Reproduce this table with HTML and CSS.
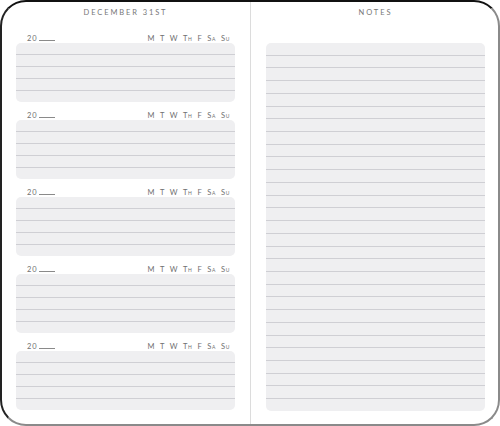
FILE: index.html
```html
<!DOCTYPE html>
<html lang="en">

<head>
    <meta charset="UTF-8">
    <meta name="viewport" content="width=device-width, initial-scale=1.0">
    <title>Planner - December 31st</title>
    <link rel="stylesheet" href="styles.css">
</head>

<body>
    <div class="notebook">
        <div class="page page-left">
            <div class="page-title">December 31st</div>
            <div class="entry">
                <div class="entry-head">
                    <span class="year">20<span class="blank"></span></span>
                    <span class="days">M T W Th F Sa Su</span>
                </div>
                <div class="box">
                    <div class="row"></div><div class="row"></div><div class="row"></div><div class="row"></div><div class="row"></div>
                </div>
            </div>
            <div class="entry">
                <div class="entry-head">
                    <span class="year">20<span class="blank"></span></span>
                    <span class="days">M T W Th F Sa Su</span>
                </div>
                <div class="box">
                    <div class="row"></div><div class="row"></div><div class="row"></div><div class="row"></div><div class="row"></div>
                </div>
            </div>
            <div class="entry">
                <div class="entry-head">
                    <span class="year">20<span class="blank"></span></span>
                    <span class="days">M T W Th F Sa Su</span>
                </div>
                <div class="box">
                    <div class="row"></div><div class="row"></div><div class="row"></div><div class="row"></div><div class="row"></div>
                </div>
            </div>
            <div class="entry">
                <div class="entry-head">
                    <span class="year">20<span class="blank"></span></span>
                    <span class="days">M T W Th F Sa Su</span>
                </div>
                <div class="box">
                    <div class="row"></div><div class="row"></div><div class="row"></div><div class="row"></div><div class="row"></div>
                </div>
            </div>
            <div class="entry">
                <div class="entry-head">
                    <span class="year">20<span class="blank"></span></span>
                    <span class="days">M T W Th F Sa Su</span>
                </div>
                <div class="box">
                    <div class="row"></div><div class="row"></div><div class="row"></div><div class="row"></div><div class="row"></div>
                </div>
            </div>
        </div>

        <div class="page page-right">
            <div class="page-title">Notes</div>
            <div class="box notes-box" id="notes"></div>
        </div>
    </div>
    <script>
        const notes = document.getElementById("notes");
        for (let i = 0; i < 29; i++) {
            const row = document.createElement("div");
            row.className = "row";
            notes.appendChild(row);
        }
    </script>
</body>

</html>
```

FILE: styles.css
```css
body {
    margin: 0;
    background-color: #ffffff;
    font-family: "Lato", "Liberation Sans", sans-serif;
    font-variant-ligatures: none;
}

.notebook {
    width: 500px;
    height: 426px;
    box-sizing: border-box;
    display: flex;
    background-color: #ffffff;
    border-top: 2px solid #111111;
    border-left: 2px solid #222222;
    border-right: 2px solid #8a8a8a;
    border-bottom: 2px solid #8a8a8a;
    border-radius: 26px;
    overflow: hidden;
}

.page {
    display: flex;
    flex-direction: column;
}

.page-left {
    width: 248px;
    padding: 6px 15px 0 14px;
    box-sizing: border-box;
}

.page-right {
    flex: 1;
    border-left: 1px solid #dcdcdc;
    padding: 6px 13px 0 15px;
}

.page-title {
    height: 10px;
    line-height: 10px;
    font-size: 7.5px;
    letter-spacing: 1.9px;
    text-transform: uppercase;
    text-align: center;
    color: #777777;
    margin-bottom: 15px;
}

.entry {
    margin-bottom: 8px;
}

.entry-head {
    height: 10px;
    display: flex;
    justify-content: space-between;
    align-items: center;
    padding: 0 5px 0 11px;
    font-size: 7.5px;
    color: #707070;
}

.year {
    letter-spacing: 1px;
    display: flex;
    align-items: flex-end;
}

.blank {
    display: inline-block;
    width: 16px;
    height: 1px;
    margin-left: 1px;
    margin-bottom: 2px;
    background-color: #8a8a8a;
}

.days {
    font-variant: small-caps;
    letter-spacing: 0.6px;
    word-spacing: 2.6px;
}

.box {
    width: 219px;
    height: 59px;
    display: flex;
    flex-direction: column;
    background-color: #efeff1;
    border-radius: 5px;
    overflow: hidden;
}

.notes-box {
    height: 368px;
    margin-top: 10px;
}

.row {
    flex: 1;
}

.row + .row {
    border-top: 1px solid #cfcfd4;
}
```
